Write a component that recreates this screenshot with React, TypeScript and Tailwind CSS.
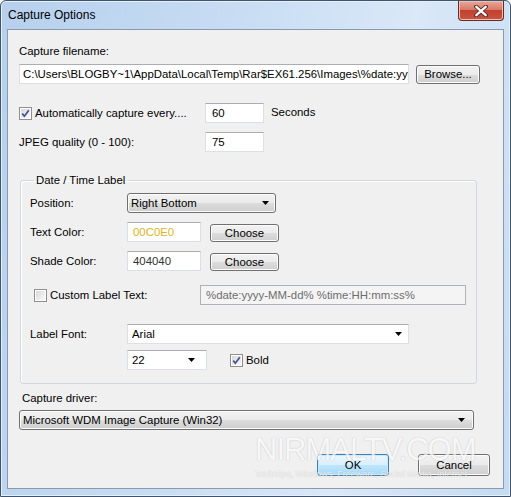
import React from "react";

const font = { fontFamily: '"Liberation Sans", Arial, sans-serif' };

function Check({ checked }: { checked?: boolean }) {
    return (
        <span className="flex h-[13px] w-[13px] shrink-0 items-center justify-center border border-[#8e8f8f] bg-white p-px">
            <span className="flex h-full w-full items-center justify-center bg-gradient-to-br from-[#d8d8d8] to-[#fafafa]">
                {checked && (
                    <svg width="9" height="9" viewBox="0 0 9 9">
                        <path d="M1.2 4.6 L3.4 7.2 L7.8 1.2" fill="none" stroke="#3d5391" strokeWidth="1.7" />
                    </svg>
                )}
            </span>
        </span>
    );
}

function Arrow() {
    return (
        <svg width="7" height="4" viewBox="0 0 7 4" className="shrink-0">
            <polygon points="0,0 7,0 3.5,4" fill="#000" />
        </svg>
    );
}

function TextBox({ value, className = "", color = "text-black" }: { value: string; className?: string; color?: string }) {
    return (
        <div className={`flex h-[20px] items-center overflow-hidden border border-[#dbdfe6] border-t-[#abadb3] bg-white pl-[3px] ${color} ${className}`}>
            <span className="whitespace-nowrap">{value}</span>
        </div>
    );
}

function Button({ label, className = "" }: { label: string; className?: string }) {
    return (
        <div className={`flex items-center justify-center rounded-[3px] border border-[#707070] bg-[linear-gradient(#f2f2f2_0%,#ebebeb_50%,#dddddd_50%,#cfcfcf_100%)] text-black shadow-[inset_0_0_0_1px_#fcfcfc] ${className}`}>
            {label}
        </div>
    );
}

function DropList({ value, className = "" }: { value: string; className?: string }) {
    return (
        <div className={`flex h-[20px] items-center justify-between rounded-[3px] border border-[#707070] bg-[linear-gradient(#f2f2f2_0%,#ebebeb_50%,#dddddd_50%,#cfcfcf_100%)] pl-[3px] pr-[6px] text-black shadow-[inset_0_0_0_1px_#fcfcfc] ${className}`}>
            <span>{value}</span>
            <Arrow />
        </div>
    );
}

function ComboBox({ value, className = "" }: { value: string; className?: string }) {
    return (
        <div className={`flex h-[20px] items-center justify-between border border-[#dbdfe6] border-t-[#abadb3] bg-white pl-[4px] pr-[6px] text-black ${className}`}>
            <span>{value}</span>
            <Arrow />
        </div>
    );
}

export default function App() {
    return (
        <div style={font} className="h-[497px] w-[511px] overflow-hidden bg-white">
            {/* window frame */}
            <div className="flex h-[497px] w-[511px] flex-col rounded-t-[6px] border border-[#3f556f] bg-[linear-gradient(100deg,#b6d0ed_0%,#cadef4_45%,#dae8f8_70%,#c5dbf2_100%)] shadow-[inset_0_0_0_1px_#e6f0fb]">
                {/* title bar */}
                <div className="flex h-[28px] shrink-0 items-start justify-between">
                    <span className="pl-[7px] pt-[7px] text-[12px] leading-[15px] text-black">Capture Options</span>
                    <div className="mr-[6px] flex h-[20px] w-[46px] items-center justify-center rounded-b-[4px] border border-t-0 border-[#6b2a23] bg-[linear-gradient(#e9a99a_0%,#d87a68_45%,#c2412f_50%,#c7553f_100%)] shadow-[inset_0_0_0_1px_#eec0b4]">
                        <svg width="14" height="12" viewBox="0 0 14 12">
                            <path d="M2 1.5 L12 10.5 M12 1.5 L2 10.5" stroke="#5a2a25" strokeWidth="4" strokeLinecap="round" />
                            <path d="M2.3 1.8 L11.7 10.2 M11.7 1.8 L2.3 10.2" stroke="#ffffff" strokeWidth="2.3" strokeLinecap="round" />
                        </svg>
                    </div>
                </div>

                {/* client area */}
                <div className="relative mx-[6px] flex h-[460px] shrink-0 flex-col border border-[#8a99ab] bg-[#f0f0f0] pl-[11px] text-[11.4px] leading-[15px] text-black">
                    <div className="mt-[14px]">Capture filename:</div>
                    <div className="mt-[5px] flex items-center">
                        <TextBox value="C:\Users\BLOGBY~1\AppData\Local\Temp\Rar$EX61.256\Images\%date:yyyyM" className="w-[390px]" />
                        <Button label="Browse..." className="ml-[7px] h-[19px] w-[64px]" />
                    </div>

                    <div className="mt-[19px] flex h-[20px] items-center">
                        <div className="flex w-[186px] items-center">
                            <Check checked />
                            <span className="ml-[3px]">Automatically capture every....</span>
                        </div>
                        <TextBox value="60" className="w-[59px] pl-[6px]" />
                        <span className="ml-[7px] -mt-[2px]">Seconds</span>
                    </div>

                    <div className="mt-[9px] flex h-[20px] items-center">
                        <div className="w-[186px]">JPEG quality (0 - 100):</div>
                        <TextBox value="75" className="w-[59px] pl-[6px]" />
                    </div>

                    {/* group box */}
                    <fieldset className="ml-px mt-[20px] w-[457px] rounded-[3px] border border-[#d0d8e0] pb-[13px] pl-[9px] shadow-[inset_1px_1px_0_#ffffff]">
                        <legend className="ml-[4px] px-[2px] leading-[16px]">Date / Time Label</legend>
                        <div className="mt-[5px] flex h-[20px] items-center">
                            <div className="w-[97px]">Position:</div>
                            <DropList value="Right Bottom" className="w-[149px]" />
                        </div>
                        <div className="mt-[9px] flex h-[20px] items-center">
                            <div className="w-[97px]">Text Color:</div>
                            <TextBox value="00C0E0" color="text-[#e0b41c]" className="w-[74px] pl-[5px]" />
                            <Button label="Choose" className="ml-[9px] mt-[2px] h-[18px] w-[69px]" />
                        </div>
                        <div className="mt-[9px] flex h-[20px] items-center">
                            <div className="w-[97px]">Shade Color:</div>
                            <TextBox value="404040" color="text-[#333]" className="w-[74px] pl-[5px]" />
                            <Button label="Choose" className="ml-[9px] mt-[2px] h-[18px] w-[69px]" />
                        </div>
                        <div className="mt-[14px] flex h-[20px] items-center">
                            <div className="flex w-[170px] items-center pl-[4px]">
                                <Check />
                                <span className="ml-[3px]">Custom Label Text:</span>
                            </div>
                            <div className="flex h-[20px] w-[266px] items-center border border-[#adb2b5] bg-[#f4f4f4] pl-[5px] text-[#6d6d6d]">
                                %date:yyyy-MM-dd% %time:HH:mm:ss%
                            </div>
                        </div>
                        <div className="mt-[19px] flex h-[20px] items-center">
                            <div className="w-[97px]">Label Font:</div>
                            <ComboBox value="Arial" className="w-[282px]" />
                        </div>
                        <div className="mt-[6px] flex h-[20px] items-center">
                            <div className="w-[97px]" />
                            <ComboBox value="22" className="w-[80px] pr-[11px]" />
                            <div className="ml-[23px] flex items-center">
                                <Check checked />
                                <span className="ml-[3px]">Bold</span>
                            </div>
                        </div>
                    </fieldset>

                    <div className="ml-[3px] mt-[7px]">Capture driver:</div>
                    <DropList value="Microsoft WDM Image Capture (Win32)" className="mt-[4px] w-[455px] pr-[8px]" />

                    <div className="mt-[24px] flex justify-end pr-[13px]">
                        <div className="flex h-[22px] w-[72px] items-center justify-center rounded-[3px] border border-[#3c7fb1] bg-[linear-gradient(#eaf6fd_0%,#d9f0fc_50%,#bee6fd_50%,#a7d9f5_100%)] shadow-[inset_0_0_0_1px_#cdeafb]">
                            OK
                        </div>
                        <Button label="Cancel" className="ml-[29px] h-[22px] w-[72px]" />
                    </div>

                    {/* watermark */}
                    <div className="pointer-events-none absolute left-[247px] top-[404px] flex flex-col items-start opacity-70">
                        <span className="text-[31px] leading-[32px] tracking-[-1px] text-[#fbfbfb] [text-shadow:0_0_1px_#bdbdbd,0_0_1px_#bdbdbd]">
                            NIRMALTV.COM
                        </span>
                        <span className="mt-[3px] text-[9px] leading-[10px] text-[#f6f6f6] [text-shadow:0_0_1px_#a8a8a8]">
                            TechTips, Windows, Freeware, Social Media, Internet
                        </span>
                    </div>
                </div>
            </div>
        </div>
    );
}
